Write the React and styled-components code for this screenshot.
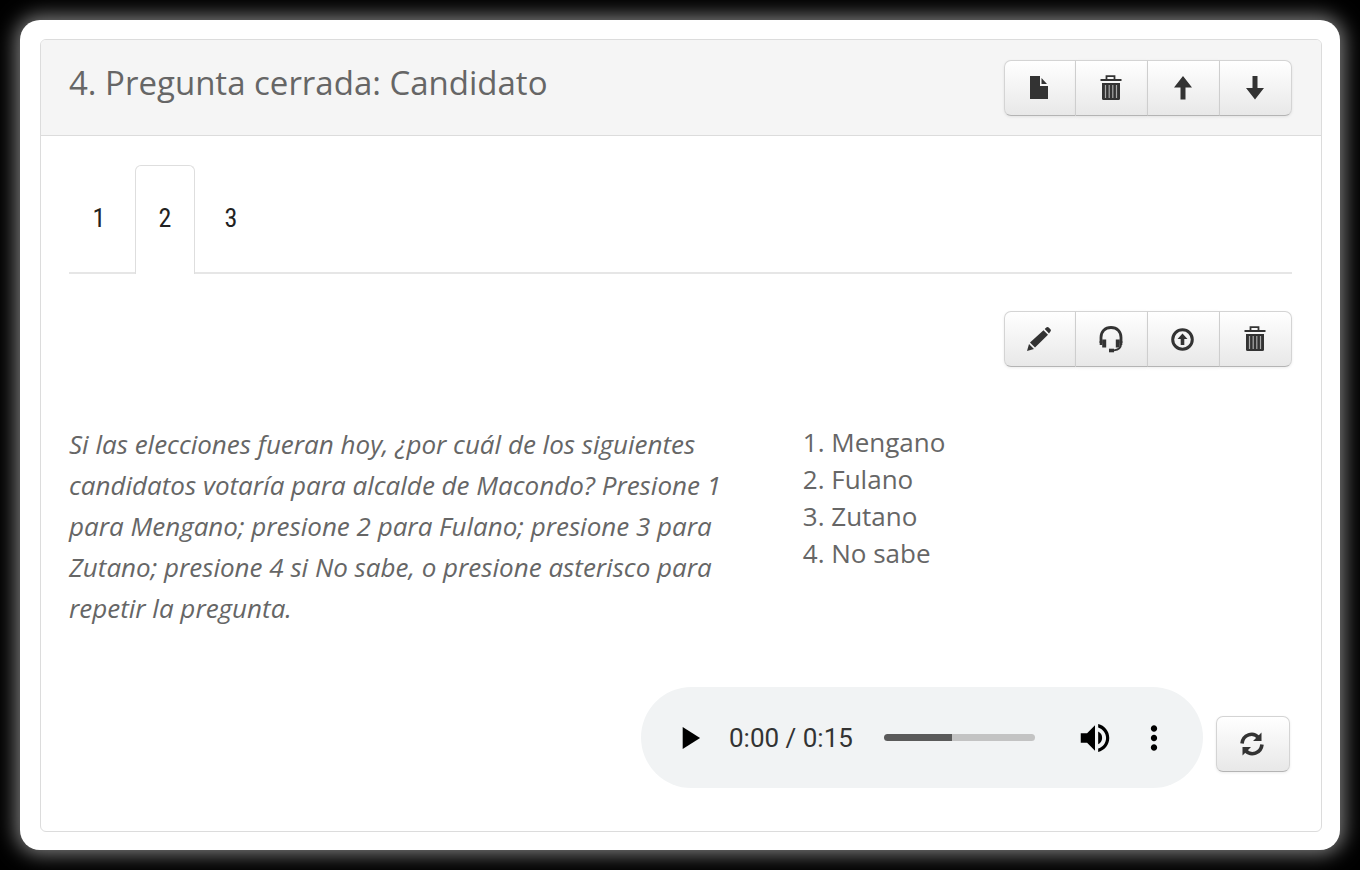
import { useState } from "react";
import styled, { createGlobalStyle } from "styled-components";
import { MdMoreVert, MdPlayArrow, MdVolumeUp } from "react-icons/md";

const GlobalStyle = createGlobalStyle`
  * {
    box-sizing: border-box;
  }
  body {
    margin: 0;
    background: #000;
    color: #666;
    font-family: "Open Sans", sans-serif;
  }
`;

const Page = styled.main`
  min-height: 100vh;
  padding: 20px;
  display: flex;
`;
const Sheet = styled.div`
  flex: 1;
  display: flex;
  padding: 19px 18px 18px 20px;
  background: #fff;
  border-radius: 20px;
  box-shadow: 0 0 20px 4px #808080;
`;
const Panel = styled.section`
  flex: 1;
  display: flex;
  flex-direction: column;
  border: 1px solid #dcdcdc;
  border-radius: 6px;
  overflow: hidden;
`;
const PanelHeader = styled.header`
  display: flex;
  justify-content: space-between;
  align-items: flex-start;
  padding: 20px 29px 19px 28px;
  background: #f5f5f5;
  border-bottom: 1px solid #dcdcdc;
`;
const Title = styled.h1`
  margin: 0;
  font-size: 33px;
  line-height: 46px;
  font-weight: 400;
`;
const PanelBody = styled.div`
  flex: 1;
  padding: 29px 29px 43px 28px;
  display: flex;
  flex-direction: column;
`;

const Tabs = styled.div`
  display: flex;
  gap: 6px;
  border-bottom: 2px solid #e6e6e6;
`;
const Tab = styled.button`
  width: 60px;
  height: 109px;
  margin-bottom: -2px;
  padding: 0 0 4px;
  border: 1px solid ${({ $active }) => ($active ? "#dedede" : "transparent")};
  border-bottom: 0;
  border-radius: 6px 6px 0 0;
  background: ${({ $active }) => ($active ? "#fff" : "transparent")};
  color: #222;
  font: 400 26px "Roboto Condensed", Roboto, sans-serif;
  cursor: pointer;
`;

const Toolbar = styled.div`
  display: flex;
  align-self: flex-end;
  margin-top: ${({ $spaced }) => ($spaced ? "37px" : "0")};
`;
const IconButton = styled.button`
  width: 74px;
  height: 56px;
  padding: 0 2px 0 0;
  display: flex;
  align-items: center;
  justify-content: center;
  border: 1px solid #d4d4d4;
  border-bottom-color: #b4b4b4;
  border-radius: 7px;
  background: linear-gradient(#fff, #e8e8e8);
  box-shadow: 0 1px 3px rgba(0, 0, 0, 0.08);
  color: #333;
  cursor: pointer;
  ${Toolbar} & {
    width: 72px;
    border-radius: 0;
  }
  ${Toolbar} &:not(:first-child) {
    border-left: 0;
  }
  ${Toolbar} &:first-child {
    border-radius: 7px 0 0 7px;
  }
  ${Toolbar} &:last-child {
    border-radius: 0 7px 7px 0;
  }
`;

const Columns = styled.div`
  display: grid;
  grid-template-columns: 3fr 2fr;
  margin-top: 57px;
`;
const Question = styled.p`
  margin: 0;
  padding-right: 60px;
  font-size: 26px;
  line-height: 41px;
  font-style: italic;
`;
const Options = styled.ol`
  margin: 0;
  padding: 0;
  list-style-position: inside;
  font-size: 26px;
  line-height: 37px;
`;

const PlayerRow = styled.div`
  display: flex;
  justify-content: flex-end;
  align-items: center;
  gap: 13px;
  margin-top: auto;
  padding-right: 2px;
`;
const RefreshSlot = styled.div`
  padding-top: 13px;
`;
const Player = styled.div`
  flex: 0 1 562px;
  height: 101px;
  padding: 0 30px 0 29px;
  display: flex;
  align-items: center;
  gap: 21px;
  border-radius: 51px;
  background: #f1f3f4;
  color: #000;
`;
const PlayerButton = styled.button`
  display: flex;
  padding: 0;
  border: 0;
  background: none;
  color: inherit;
  font-size: 38px;
  cursor: pointer;
`;
const Time = styled.span`
  color: #333;
  font: 400 26px Roboto, sans-serif;
  white-space: nowrap;
`;
const Timeline = styled.input`
  appearance: none;
  flex: 1;
  min-width: 0;
  height: 7px;
  margin: 0 20px 0 10px;
  border-radius: 4px;
  background: linear-gradient(90deg, #5a5a5a 45%, #c3c3c3 45%);
  cursor: pointer;
  &::-webkit-slider-thumb {
    appearance: none;
    width: 0;
    height: 0;
  }
`;

const FileIcon = () => (
  <svg width="18" height="24" viewBox="0 0 18 24" fill="currentColor">
    <path d="M0 0h10v10h8v13H0z" />
    <path d="M11.5 2v6H17z" />
  </svg>
);
const TrashIcon = () => (
  <svg width="22" height="26" viewBox="0 0 22 26" fill="none">
    <path d="M6.5 4V1.2h8V4" stroke="currentColor" strokeWidth="1.8" />
    <path d="M.5 5h21" stroke="currentColor" strokeWidth="2" />
    <path d="M2 8h18v15.5q0 1.5-1.5 1.5h-15Q2 25 2 23.5z" fill="currentColor" />
    <path
      d="M5.5 10v13M9.2 10v13M12.8 10v13M16.5 10v13"
      stroke="#aaa"
      strokeWidth="1.2"
    />
  </svg>
);
const ArrowIcon = ({ down }) => (
  <svg width="18" height="24" viewBox="0 0 18 24" fill="currentColor">
    <path
      d={
        down
          ? "M6.5 0h5v12H18L9 23.5 0 12h6.5z"
          : "M9 0l9 11.5h-6.5v12h-5v-12H0z"
      }
    />
  </svg>
);
const PencilIcon = () => (
  <svg width="24" height="24" viewBox="0 0 24 24" fill="currentColor">
    <path d="M0 24l2-7 5 5zM3 15.5L16.5 3.2l4.500 4.500L8 20.500zM17.700 2l1.600-1.500q1.200-1 2.400.1l1.700 1.700q1 1.200 0 2.300L22 6.500z" />
  </svg>
);
const HeadsetIcon = () => (
  <svg
    width="24"
    height="27"
    viewBox="0 0 24 27"
    fill="none"
    stroke="currentColor"
  >
    <path
      d="M2 17v-5.500C2 5.500 6 1.500 12 1.500s10 4 10 10V17"
      strokeWidth="2.8"
    />
    <path d="M5.200 13.500v8M18.800 13.500v8" strokeWidth="4" />
    <path d="M2 15v4M22 15v4" strokeWidth="2.6" />
    <path d="M22 18.500q0 5-7 5.800" strokeWidth="1.8" />
    <path d="M10 24.500h5" strokeWidth="3.6" />
  </svg>
);
const CircleUpIcon = () => (
  <svg width="23" height="23" viewBox="0 0 23 23" fill="none">
    <circle cx="11.5" cy="11.5" r="9.8" stroke="currentColor" strokeWidth="3" />
    <path d="M11.5 5.500l5 5.500h-3.200v6H9.700v-6H6.500z" fill="currentColor" />
  </svg>
);
const RefreshIcon = () => (
  <svg width="24" height="24" viewBox="0 0 24 24" fill="none">
    <path
      d="M2 11.500C3 2.500 13-.5 18.500 5.500M22 12.500C21 21.500 11 24.500 5.500 18.500"
      stroke="currentColor"
      strokeWidth="3.6"
    />
    <path d="M21.500.5v8.500h-8.500zM2.500 23.500v-8.500h8.500z" fill="currentColor" />
  </svg>
);

const options = ["Mengano", "Fulano", "Zutano", "No sabe"];

export default function App() {
  const [tab, setTab] = useState(2);
  return (
    <>
      <GlobalStyle />
      <Page>
        <Sheet>
          <Panel>
            <PanelHeader>
              <Title>4. Pregunta cerrada: Candidato</Title>
              <Toolbar>
                <IconButton aria-label="Copiar pregunta">
                  <FileIcon />
                </IconButton>
                <IconButton aria-label="Eliminar pregunta">
                  <TrashIcon />
                </IconButton>
                <IconButton aria-label="Subir">
                  <ArrowIcon />
                </IconButton>
                <IconButton aria-label="Bajar">
                  <ArrowIcon down />
                </IconButton>
              </Toolbar>
            </PanelHeader>
            <PanelBody>
              <Tabs role="tablist">
                {[1, 2, 3].map((n) => (
                  <Tab
                    key={n}
                    role="tab"
                    aria-selected={tab === n}
                    $active={tab === n}
                    onClick={() => setTab(n)}
                  >
                    {n}
                  </Tab>
                ))}
              </Tabs>
              <Toolbar $spaced>
                <IconButton aria-label="Editar">
                  <PencilIcon />
                </IconButton>
                <IconButton aria-label="Audio">
                  <HeadsetIcon />
                </IconButton>
                <IconButton aria-label="Cargar">
                  <CircleUpIcon />
                </IconButton>
                <IconButton aria-label="Eliminar">
                  <TrashIcon />
                </IconButton>
              </Toolbar>
              <Columns>
                <Question>
                  Si las elecciones fueran hoy, ¿por cuál de los siguientes
                  candidatos votaría para alcalde de Macondo? Presione 1 para
                  Mengano; presione 2 para Fulano; presione 3 para Zutano;
                  presione 4 si No sabe, o presione asterisco para repetir la
                  pregunta.
                </Question>
                <Options>
                  {options.map((option) => (
                    <li key={option}>{option}</li>
                  ))}
                </Options>
              </Columns>
              <PlayerRow>
                <Player>
                  <PlayerButton aria-label="Reproducir">
                    <MdPlayArrow />
                  </PlayerButton>
                  <Time>0:00 / 0:15</Time>
                  <Timeline type="range" aria-label="Posición" defaultValue={0} />
                  <PlayerButton aria-label="Volumen">
                    <MdVolumeUp />
                  </PlayerButton>
                  <PlayerButton aria-label="Más opciones">
                    <MdMoreVert />
                  </PlayerButton>
                </Player>
                <RefreshSlot>
                  <IconButton aria-label="Actualizar">
                    <RefreshIcon />
                  </IconButton>
                </RefreshSlot>
              </PlayerRow>
            </PanelBody>
          </Panel>
        </Sheet>
      </Page>
    </>
  );
}
